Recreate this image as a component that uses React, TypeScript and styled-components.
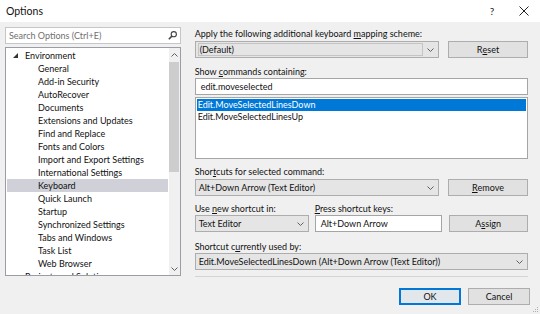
import styled, { createGlobalStyle } from "styled-components";

const GlobalStyle = createGlobalStyle`
  html, body {
    margin: 0;
    padding: 0;
    background: #f0f0f0;
  }
  body {
    font-family: "Segoe UI", Lato, "Noto Sans", sans-serif;
    font-size: 9px;
    color: #111;
  }
`;

const Window = styled.div`
  position: relative;
  width: 540px;
  height: 314px;
  display: flex;
  flex-direction: column;
  background: #f0f0f0;
  overflow: hidden;
`;

const TitleBar = styled.div`
  height: 22px;
  background: #fff;
  display: flex;
  align-items: center;
  padding-left: 6px;
  font-size: 10.5px;
`;

const Title = styled.span`
  flex: 1;
`;

const TitleButton = styled.span`
  width: 32px;
  display: flex;
  justify-content: center;
  align-items: center;
  font-size: 10px;
  color: #222;
`;

const Main = styled.div`
  display: flex;
  gap: 14px;
  padding: 5px 12px 0 5px;
`;

const LeftCol = styled.div`
  width: 176px;
  display: flex;
  flex-direction: column;
  gap: 3px;
`;

const SearchBox = styled.div`
  height: 15px;
  border: 1px solid #c6c6c6;
  background: #fff;
  display: flex;
  align-items: center;
  padding: 0 3px 0 3px;
  color: #707070;
`;

const SearchText = styled.span`
  flex: 1;
`;

const Tree = styled.div`
  height: 227px;
  border: 1px solid #9a9da4;
  background: #fff;
  display: flex;
  overflow: hidden;
`;

const TreeRows = styled.div`
  flex: 1;
  padding: 1px 1px 0 1px;
`;

const TreeRow = styled.div<{ $level: number; $selected?: boolean }>`
  height: 13px;
  line-height: 13px;
  display: flex;
  align-items: center;
  padding-left: ${(p) => (p.$level === 0 ? 6 : 31)}px;
  background: ${(p) => (p.$selected ? "#cfd0d8" : "transparent")};
  white-space: nowrap;
`;

const Expander = styled.span`
  width: 12px;
  display: flex;
  align-items: center;
`;

const ScrollBar = styled.div`
  width: 11px;
  background: #f0f0f0;
  display: flex;
  flex-direction: column;
  align-items: center;
`;

const ScrollArrow = styled.div`
  height: 13px;
  display: flex;
  align-items: center;
  justify-content: center;
`;

const ScrollThumb = styled.div`
  width: 10px;
  height: 110px;
  margin-top: 1px;
  background: #cdcdcd;
`;

const ScrollSpacer = styled.div`
  flex: 1;
`;

const RightCol = styled.div`
  width: 334px;
  display: flex;
  flex-direction: column;
`;

const Label = styled.div<{ $top?: number }>`
  height: 13px;
  line-height: 13px;
  margin-top: ${(p) => p.$top ?? 0}px;
  white-space: nowrap;
`;

const ControlRow = styled.div<{ $top?: number }>`
  display: grid;
  grid-template-columns: 1fr 80px;
  gap: 9px;
  margin-top: ${(p) => p.$top ?? 0}px;
`;

const Combo = styled.div`
  height: 15px;
  border: 1px solid #adadad;
  background: #e5e5e5;
  display: flex;
  align-items: center;
  padding-left: 3px;
  white-space: nowrap;
  overflow: hidden;
`;

const ComboInner = styled.div`
  flex: 1;
  height: 11px;
  line-height: 11px;
  border: 1px solid #c4c4c4;
  margin-left: -1px;
  padding-left: 1px;
`;

const ComboText = styled.span`
  flex: 1;
`;

const ComboArrow = styled.span`
  width: 15px;
  display: flex;
  justify-content: center;
  align-items: center;
`;

const Button = styled.div<{ $default?: boolean }>`
  height: 15px;
  border: 1px solid ${(p) => (p.$default ? "#0078d7" : "#adadad")};
  box-shadow: ${(p) => (p.$default ? "inset 0 0 0 1px #0078d7" : "none")};
  background: ${(p) => (p.$default ? "#e2e7ec" : "#e1e1e1")};
  display: flex;
  align-items: center;
  justify-content: center;
`;

const TextBox = styled.div`
  height: 15px;
  border: 1px solid #a5a5a5;
  background: #fff;
  display: flex;
  align-items: center;
  padding-left: 5px;
  white-space: nowrap;
`;

const ListBox = styled.div`
  height: 58px;
  margin-top: 2px;
  border: 1px solid #a5a5a5;
  background: #fff;
  padding: 1px;
`;

const ListItem = styled.div<{ $selected?: boolean }>`
  height: 12px;
  line-height: 12px;
  padding-left: 1px;
  background: ${(p) => (p.$selected ? "#0078d7" : "transparent")};
  color: ${(p) => (p.$selected ? "#fff" : "#111")};
`;

const ShortcutGrid = styled.div`
  display: grid;
  grid-template-columns: 114px 127px 80px;
  column-gap: 6px;
  margin-top: 6px;

  & > :nth-child(3n) {
    margin-left: 1px;
  }
`;

const Separator = styled.div`
  height: 1px;
  margin-top: 6px;
  background: #d4d4d4;
`;

const Footer = styled.div`
  display: flex;
  justify-content: flex-end;
  gap: 7px;
  padding: 11px 10px 0 0;
`;

const FooterButton = styled(Button)`
  width: 60px;
`;

const Grip = styled.svg`
  position: absolute;
  right: 1px;
  bottom: 1px;
`;

const Chevron = ({ up }: { up?: boolean }) => (
  <svg width="7" height="4" viewBox="0 0 7 4">
    <path
      d={up ? "M0.5 3.5 L3.5 0.5 L6.5 3.5" : "M0.5 0.5 L3.5 3.5 L6.5 0.5"}
      fill="none"
      stroke="#606060"
      strokeWidth="1"
    />
  </svg>
);

const treeItems = [
  "General",
  "Add-in Security",
  "AutoRecover",
  "Documents",
  "Extensions and Updates",
  "Find and Replace",
  "Fonts and Colors",
  "Import and Export Settings",
  "International Settings",
  "Keyboard",
  "Quick Launch",
  "Startup",
  "Synchronized Settings",
  "Tabs and Windows",
  "Task List",
  "Web Browser",
];

const ComboBox = ({ children, inner }: { children: React.ReactNode; inner?: boolean }) => (
  <Combo>
    {inner ? <ComboInner>{children}</ComboInner> : <ComboText>{children}</ComboText>}
    <ComboArrow>
      <Chevron />
    </ComboArrow>
  </Combo>
);

export default function App() {
  return (
    <>
      <GlobalStyle />
      <Window>
        <TitleBar>
          <Title>Options</Title>
          <TitleButton>?</TitleButton>
          <TitleButton>
            <svg width="10" height="10" viewBox="0 0 10 10">
              <path d="M0.5 0.5 L9.5 9.5 M9.5 0.5 L0.5 9.5" stroke="#222" strokeWidth="1" />
            </svg>
          </TitleButton>
        </TitleBar>

        <Main>
          <LeftCol>
            <SearchBox>
              <SearchText>Search Options (Ctrl+E)</SearchText>
              <svg width="9" height="9" viewBox="0 0 9 9">
                <circle cx="5.8" cy="3.2" r="2.6" fill="none" stroke="#444" strokeWidth="1.1" />
                <path d="M3.9 5.1 L0.8 8.2" stroke="#444" strokeWidth="1.5" />
              </svg>
            </SearchBox>
            <Tree>
              <TreeRows>
                <TreeRow $level={0}>
                  <Expander>
                    <svg width="5" height="5" viewBox="0 0 5 5">
                      <path d="M5 0 L5 5 L0 5 Z" fill="#333" />
                    </svg>
                  </Expander>
                  Environment
                </TreeRow>
                {treeItems.map((item) => (
                  <TreeRow key={item} $level={1} $selected={item === "Keyboard"}>
                    {item}
                  </TreeRow>
                ))}
                <TreeRow $level={0}>
                  <Expander />
                  Projects and Solutions
                </TreeRow>
              </TreeRows>
              <ScrollBar>
                <ScrollArrow>
                  <Chevron up />
                </ScrollArrow>
                <ScrollThumb />
                <ScrollSpacer />
                <ScrollArrow>
                  <Chevron />
                </ScrollArrow>
              </ScrollBar>
            </Tree>
          </LeftCol>

          <RightCol>
            <Label>
              Apply the following additional keyboard <u>m</u>apping scheme:
            </Label>
            <ControlRow $top={1}>
              <ComboBox inner>(Default)</ComboBox>
              <Button>
                R<u>e</u>set
              </Button>
            </ControlRow>

            <Label $top={7}>
              Show <u>c</u>ommands containing:
            </Label>
            <TextBox>edit.moveselected</TextBox>
            <ListBox>
              <ListItem $selected>Edit.MoveSelectedLinesDown</ListItem>
              <ListItem>Edit.MoveSelectedLinesUp</ListItem>
            </ListBox>

            <Label $top={6}>
              Shor<u>t</u>cuts for selected command:
            </Label>
            <ControlRow $top={1}>
              <ComboBox>Alt+Down Arrow (Text Editor)</ComboBox>
              <Button>
                <u>R</u>emove
              </Button>
            </ControlRow>

            <ShortcutGrid>
              <Label>
                Use <u>n</u>ew shortcut in:
              </Label>
              <Label>
                <u>P</u>ress shortcut keys:
              </Label>
              <span />
              <ComboBox>Text Editor</ComboBox>
              <TextBox>Alt+Down Arrow</TextBox>
              <Button>
                A<u>s</u>sign
              </Button>
            </ShortcutGrid>

            <Label $top={8}>
              Shortcut c<u>u</u>rrently used by:
            </Label>
            <ComboBox>Edit.MoveSelectedLinesDown (Alt+Down Arrow (Text Editor))</ComboBox>
            <Separator />
          </RightCol>
        </Main>

        <Footer>
          <FooterButton $default>OK</FooterButton>
          <FooterButton>Cancel</FooterButton>
        </Footer>

        <Grip width="8" height="8" viewBox="0 0 8 8">
          <rect x="6" y="2" width="1" height="1" fill="#b0b0b0" />
          <rect x="4" y="4" width="1" height="1" fill="#b0b0b0" />
          <rect x="6" y="4" width="1" height="1" fill="#b0b0b0" />
          <rect x="2" y="6" width="1" height="1" fill="#b0b0b0" />
          <rect x="4" y="6" width="1" height="1" fill="#b0b0b0" />
          <rect x="6" y="6" width="1" height="1" fill="#b0b0b0" />
        </Grip>
      </Window>
    </>
  );
}
